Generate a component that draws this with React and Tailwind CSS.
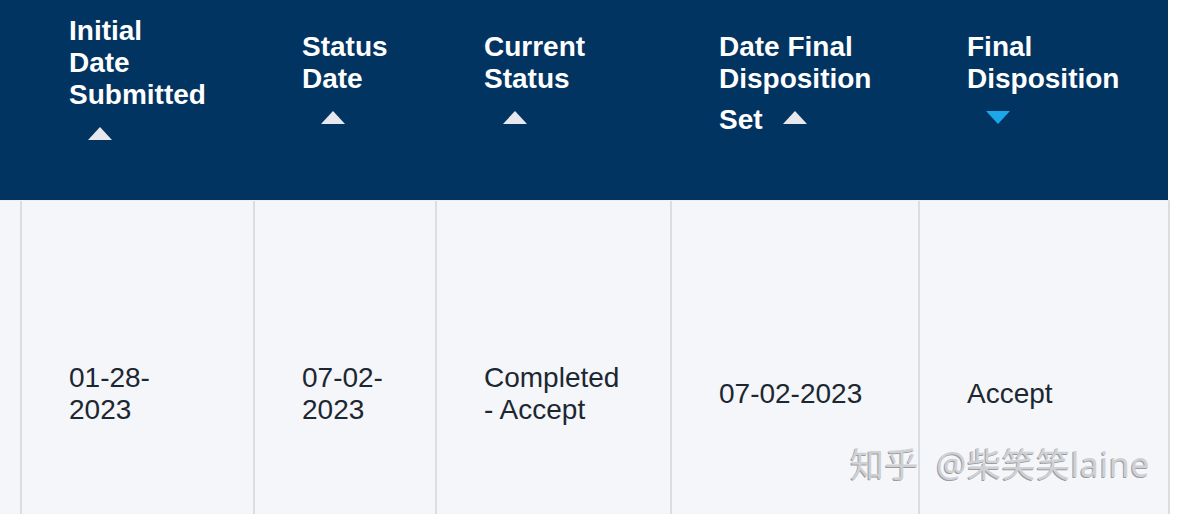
const columns = [
    { key: "initial", width: "w-[233px]", head: [["Initial"], ["Date"], ["Submitted"]], arrow: "up", arrowInline: false, value: ["01-28-", "2023"] },
    { key: "status", width: "w-[182px]", head: [["Status"], ["Date"]], arrow: "up", arrowInline: false, value: ["07-02-", "2023"] },
    { key: "current", width: "w-[235px]", head: [["Current"], ["Status"]], arrow: "up", arrowInline: false, value: ["Completed", "- Accept"] },
    { key: "dateFinal", width: "w-[248px]", head: [["Date Final"], ["Disposition"], ["Set"]], arrow: "up", arrowInline: true, value: ["07-02-2023"] },
    { key: "final", width: "w-[250px]", head: [["Final"], ["Disposition"]], arrow: "down", arrowInline: false, value: ["Accept"] },
];

function SortArrow({ dir }) {
    if (dir === "down") {
        return (
            <svg width="24" height="13" viewBox="0 0 24 13" className="ml-[19px] mb-[5px] shrink-0">
                <polygon points="0,0 24,0 12,13" fill="#1ba7e8" />
            </svg>
        );
    }
    return (
        <svg width="24" height="13" viewBox="0 0 24 13" className="ml-[19px] mb-[5px] shrink-0">
            <polygon points="12,0 24,13 0,13" fill="#e7e7ee" />
        </svg>
    );
}

function HeaderCell({ col }) {
    const lines = col.head.map((l) => l[0]);
    const last = lines[lines.length - 1];
    return (
        <div className={`${col.width} h-full flex items-center pl-[49px] pb-[33px] shrink-0`}>
            <div className="text-white font-bold text-[28px] leading-[32px]">
                {(col.arrowInline ? lines.slice(0, -1) : lines).map((line) => (
                    <div key={line}>{line}</div>
                ))}
                <div className="mt-[9px] h-[32px] flex items-center">
                    {col.arrowInline && <span>{last}</span>}
                    <span className={col.arrowInline ? "ml-px flex items-center" : "flex items-center"}>
                        <SortArrow dir={col.arrow} />
                    </span>
                </div>
            </div>
        </div>
    );
}

export default function App() {
    return (
        <div className="relative w-full h-[514px] overflow-hidden bg-white font-['Liberation_Sans',Arial,sans-serif]">
            {/* Header */}
            <div className="flex w-[1168px] h-[200px] bg-[#023461]">
                <div className="w-[20px] shrink-0" />
                {columns.map((col) => (
                    <HeaderCell key={col.key} col={col} />
                ))}
            </div>

            {/* Row */}
            <div className="flex w-[1170px] h-[386px] bg-[#f4f6fa] border-t border-[#e7eff9] border-r-2 border-r-[#dcdde1]">
                <div className="w-[20px] shrink-0" />
                {columns.map((col) => (
                    <div
                        key={col.key}
                        className={`${col.width} shrink-0 flex items-center border-l-2 border-[#dcdde1] pl-[47px] text-[28px] leading-[32px] text-[#1c2731]`}
                    >
                        <div>
                            {col.value.map((v) => (
                                <div key={v}>{v}</div>
                            ))}
                        </div>
                    </div>
                ))}
            </div>

            {/* Watermark */}
            <div className="absolute left-[850px] top-[442px] whitespace-nowrap text-[34px] leading-[44px] tracking-[0.5px] text-[#cfd0d3] [text-shadow:-1px_1px_0_#9c9c9f] font-['Noto_Sans','Noto_Sans_CJK_SC',sans-serif]">
                知乎<span className="ml-[17px]">@柴笑笑laine</span>
            </div>
        </div>
    );
}
